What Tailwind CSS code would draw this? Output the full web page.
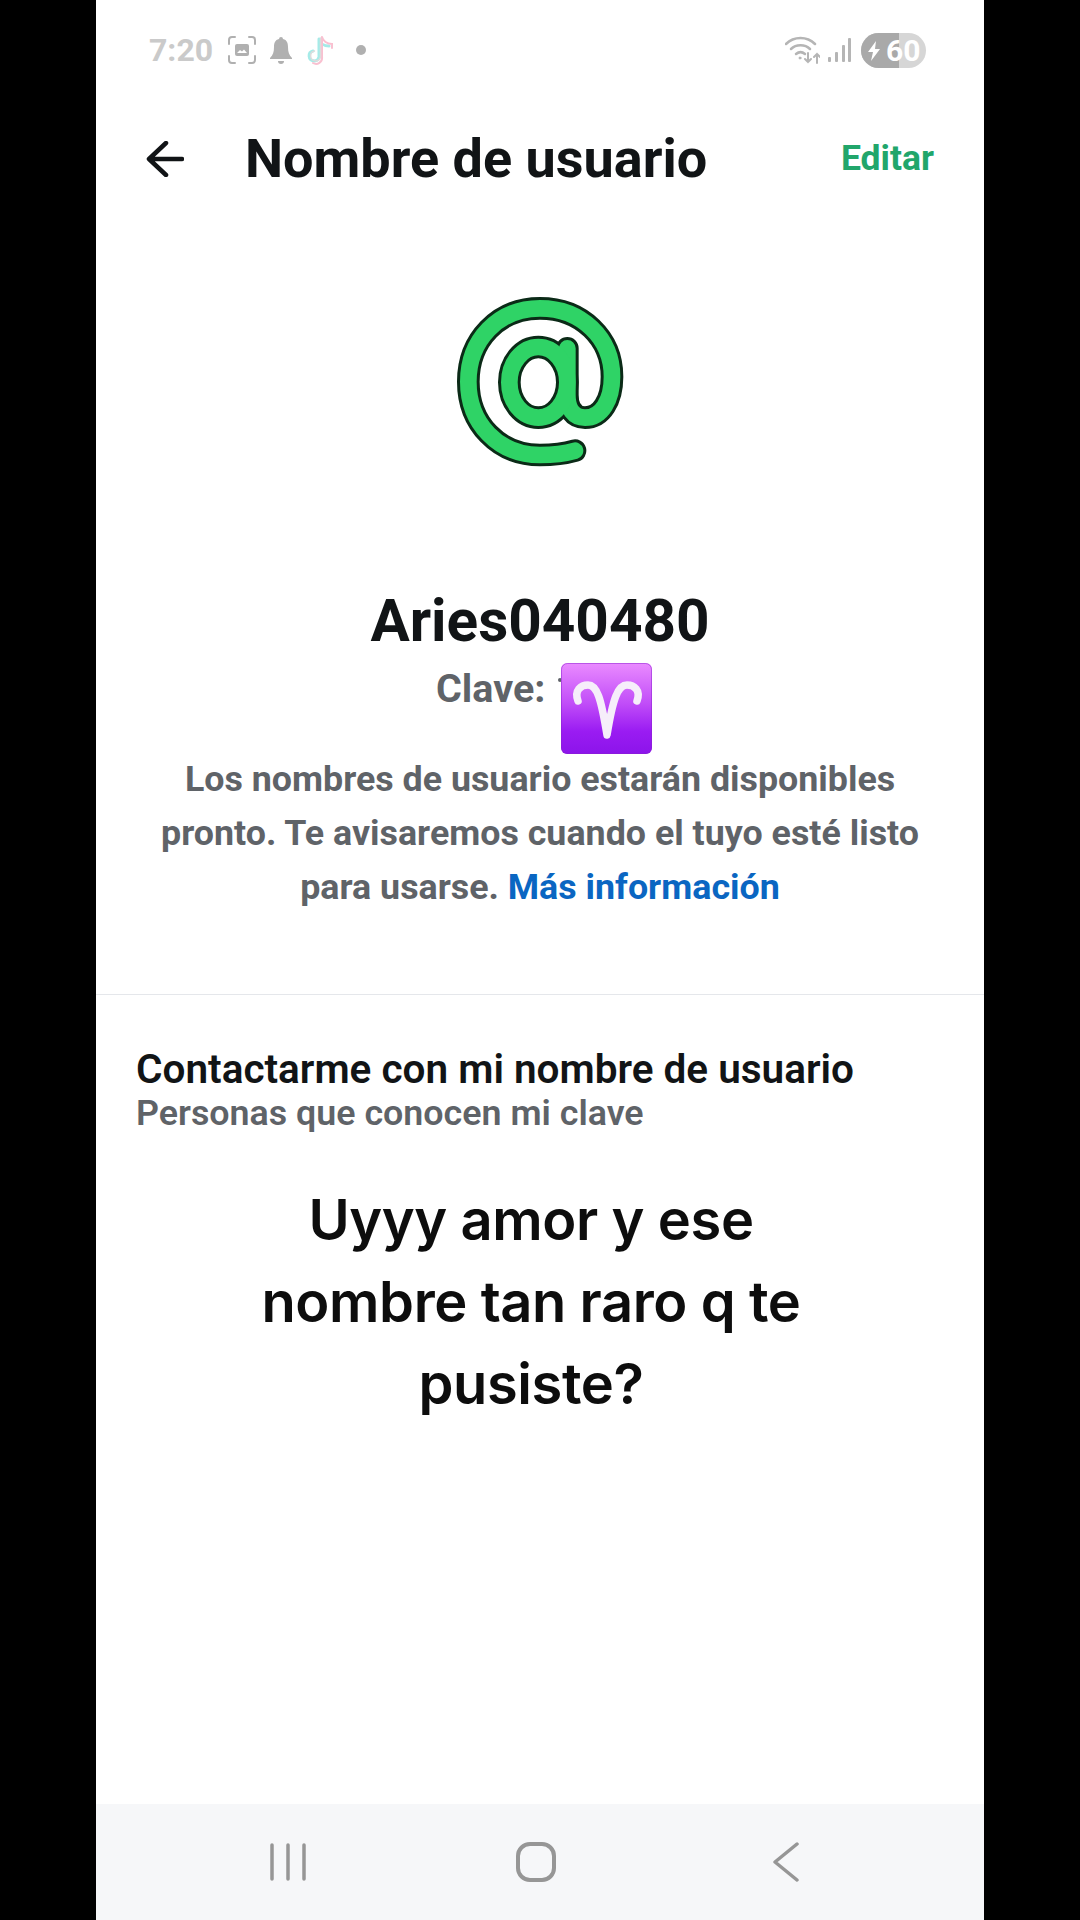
<!DOCTYPE html>
<html lang="es">
<head>
<meta charset="utf-8">
<script src="https://cdn.jsdelivr.net/npm/@tailwindcss/browser@4"></script>
</head>
<body class="m-0 bg-black">
<div class="w-[1080px] h-[1920px] bg-black flex justify-center font-['Roboto',sans-serif]">
  <div class="w-[888px] h-full bg-white flex flex-col">

    <div class="h-[100px] shrink-0 flex items-center justify-between pl-[53px] pr-[58px]">
      <div class="flex items-center">
        <span class="text-[32px] font-bold text-[#cacaca] leading-none w-[64px]">7:20</span>
        <svg class="ml-[15px] w-[28px] h-[28px]" viewBox="0 0 28 28" fill="none">
          <path d="M1 8V4a3 3 0 0 1 3-3h3M21 1h3a3 3 0 0 1 3 3v4M27 20v4a3 3 0 0 1-3 3h-3M7 27H4a3 3 0 0 1-3-3v-4" stroke="#b0b0b0" stroke-width="2" stroke-linecap="round"/>
          <rect x="7" y="8" width="14" height="12" rx="2" fill="#b0b0b0"/>
          <path d="M9 17l3-3 2 1.500 2-2 3 3.500z" fill="#fff"/>
        </svg>
        <svg class="ml-[14px] w-[22px] h-[27px]" viewBox="0 0 22 27" fill="#b0b0b0">
          <path d="M11 0a2 2 0 0 1 2 2c4 1 5 4 5 8 0 5 1 8 4 11v1H0v-1c3-3 4-6 4-11 0-4 1-7 5-8a2 2 0 0 1 2-2z"/>
          <path d="M8 24h6a3 3 0 0 1-6 0z"/>
        </svg>
        <svg class="ml-[13px] w-[29px] h-[32px]" viewBox="0 0 29 32" fill="none" stroke-linecap="round">
          <path d="M14 5v18a5 5 0 1 1-6-6M14 5c1 4 5 7 10 7" stroke="#a5ebe8" stroke-width="3"/>
          <path d="M17 3v20a6 6 0 0 1-9 6M17 3c1 4 5 7 10 7v4" stroke="#f9c0d0" stroke-width="2"/>
          <path d="M15.500 4v19a5 5 0 1 1-6-6" stroke="#dcdcdc" stroke-width="1.500"/>
        </svg>
        <span class="ml-[22px] w-[10px] h-[10px] rounded-full bg-[#b0b0b0]"></span>
      </div>
      <div class="flex items-center">
        <svg class="w-[35px] h-[28px]" viewBox="0 0 35 28" fill="none" stroke="#b5b5b5" stroke-linecap="round">
          <path d="M1 8C9 0 22 0 30 8" stroke-width="2.500"/>
          <path d="M6 13c5-5 14-5 19 0" stroke-width="2.500"/>
          <path d="M11 18c3-2.500 6-2.500 9 0" stroke-width="2.500"/>
          <circle cx="15" cy="22" r="1" fill="#b5b5b5"/>
          <path d="M23 17v9M20 23l3 3 3-3M32 27v-9M29 21l3-3 3 3" stroke-width="2"/>
        </svg>
        <svg class="ml-[8px] w-[23px] h-[24px]" viewBox="0 0 23 24" fill="#b5b5b5">
          <rect x="0" y="19" width="3" height="5" rx="1"/>
          <rect x="7" y="14" width="3" height="10" rx="1"/>
          <rect x="14" y="7" width="3" height="17" rx="1"/>
          <rect x="20" y="0" width="3" height="24" rx="1"/>
        </svg>
        <div class="relative ml-[10px] w-[65px] h-[35px] rounded-full overflow-hidden bg-[#d6d6d6] flex items-center">
          <div class="w-[38px] h-full bg-[#a9a9a9]"></div>
          <svg class="absolute left-[7px] top-[8px] w-[12px] h-[20px]" viewBox="0 0 12 20" fill="#fff"><path d="M8 0L0 11h5l-2 9 9-12H7z"/></svg>
          <span class="absolute left-[25px] top-0 leading-[35px] text-[30px] font-bold text-white">60</span>
        </div>
      </div>
    </div>

    <div class="h-[118px] shrink-0 flex items-center pl-[50px] pr-[50px]">
      <svg class="w-[38px] h-[36px] shrink-0" viewBox="0 0 38 36" fill="none" stroke="#111416" stroke-width="4.500" stroke-linecap="round" stroke-linejoin="round">
        <path d="M36 18H3M20 2L3 18l17 16"/>
      </svg>
      <span class="ml-[61px] text-[54px] font-bold text-[#111416] leading-none">Nombre de usuario</span>
      <span class="ml-auto text-[35.500px] font-bold text-[#21a66b] leading-none">Editar</span>
    </div>

    <div class="mt-[62px] flex justify-center shrink-0">
      <svg class="w-[220px] h-[200px]" viewBox="0 0 660 600" fill="none" stroke-linecap="round" stroke-linejoin="round">
        <g stroke="#0b2a17" stroke-width="68">
          <path d="M435 512C400 522 370 525 330 525C205 525 115 430 115 305C115 180 205 85 330 85C455 85 546 175 546 290C546 360 515 413 465 413C430 413 412 385 412 345L412 205"/>
          <ellipse cx="325" cy="307" rx="87" ry="106"/>
        </g>
        <g stroke="#2fd366" stroke-width="50">
          <path d="M435 512C400 522 370 525 330 525C205 525 115 430 115 305C115 180 205 85 330 85C455 85 546 175 546 290C546 360 515 413 465 413C430 413 412 385 412 345L412 205"/>
          <ellipse cx="325" cy="307" rx="87" ry="106"/>
        </g>
      </svg>
    </div>

    <div class="mt-[106px] h-[70px] shrink-0 text-center text-[58.500px] font-bold text-[#111416] leading-[70px]">Aries040480</div>

    <div class="relative mt-[6px] h-[54px] shrink-0 pl-[340px] text-[39.500px] font-bold text-[#5f6368] leading-[54px]">
      Clave:
      <svg class="absolute left-[465px] top-[1px] w-[91px] h-[91px] overflow-visible" viewBox="0 0 91 91" fill="none">
        <defs>
          <linearGradient id="ar" x1="0" y1="0" x2="0" y2="1">
            <stop offset="0" stop-color="#ea8bff"/>
            <stop offset="0.45" stop-color="#c04cf8"/>
            <stop offset="0.75" stop-color="#9a1cf2"/>
            <stop offset="1" stop-color="#8c14ea"/>
          </linearGradient>
        </defs>
        <circle cx="-1" cy="17" r="2" fill="#5f6368"/>
        <rect width="91" height="91" rx="6" fill="url(#ar)"/>
        <rect x="0.500" y="0.500" width="90" height="90" rx="6" stroke="#8a20d0" stroke-opacity="0.5"/>
        <path d="M17 38C13 27 20 22 27 22C36 22 40 35 46 72C52 35 57 22 66 22C73 22 80 27 76 38" stroke="#f6eefa" stroke-width="7.500" stroke-linecap="round" stroke-linejoin="round"/>
      </svg>
    </div>

    <p class="mt-[36px] shrink-0 text-center text-[35.800px] font-bold text-[#5f6368] leading-[54px]">
      Los nombres de usuario estarán disponibles<br>
      pronto. Te avisaremos cuando el tuyo esté listo<br>
      para usarse. <span class="text-[#0a66c2]">Más información</span>
    </p>

    <div class="mt-[80px] h-[1px] shrink-0 bg-[#e5e7eb]"></div>

    <div class="mt-[52px] h-[44px] shrink-0 pl-[40px] text-[40.500px] font-semibold text-[#111416] leading-[44px]">Contactarme con mi nombre de usuario</div>
    <div class="h-[44px] shrink-0 pl-[40px] text-[35.800px] font-semibold text-[#5f6368] leading-[44px]">Personas que conocen mi clave</div>

    <div class="mt-[44px] shrink-0 pr-[18px] text-center text-[56px] font-semibold tracking-[-0.4px] text-[#0d0d0d] leading-[82px] font-['Inter',sans-serif]">
      Uyyy amor y ese<br>nombre tan raro q te<br>pusiste?
    </div>

    <div class="mt-auto h-[116px] shrink-0 bg-[#f6f7f9] relative flex items-start">
      <svg class="ml-[174px] mt-[39px] w-[36px] h-[38px]" viewBox="0 0 36 38" fill="none" stroke="#969696" stroke-width="3.500" stroke-linecap="round">
        <path d="M2 2v34M18 2v34M34 2v34"/>
      </svg>
      <svg class="ml-[210px] mt-[38px] w-[40px] h-[40px]" viewBox="0 0 40 40" fill="none" stroke="#969696" stroke-width="4">
        <rect x="2" y="2" width="36" height="36" rx="12"/>
      </svg>
      <svg class="ml-[217px] mt-[38px] w-[26px] h-[40px]" viewBox="0 0 26 40" fill="none" stroke="#969696" stroke-width="3.500" stroke-linecap="round" stroke-linejoin="round">
        <path d="M24 2L2 20l22 18"/>
      </svg>
    </div>
  </div>
</div>
</body>
</html>
